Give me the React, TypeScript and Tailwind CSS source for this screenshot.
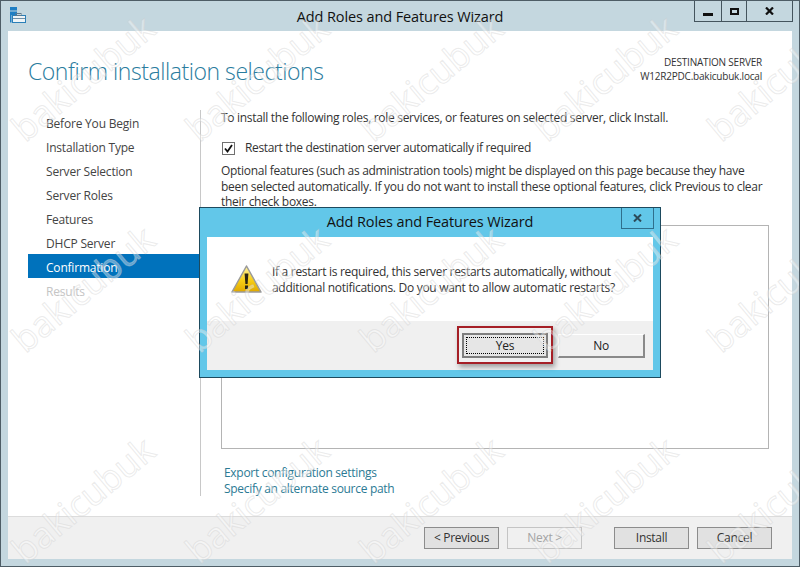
const steps = [
  "Before You Begin",
  "Installation Type",
  "Server Selection",
  "Server Roles",
  "Features",
  "DHCP Server",
  "Confirmation",
  "Results",
]

const marks: { x: number; y: number }[] = []
for (const y of [77, 288, 499]) {
  for (const x of [82, 256, 430, 604, 778]) {
    marks.push({ x, y })
  }
}

function ServerIcon() {
  return (
    <svg width="17" height="17" viewBox="0 0 17 17" className="absolute left-[9px] top-[6px]">
      <rect x="0" y="0" width="7" height="3.5" fill="#1f7fc4" />
      <rect x="0" y="4.5" width="7" height="3.5" fill="#1f7fc4" />
      <rect x="0" y="8" width="1.5" height="7.5" fill="#1f7fc4" />
      <rect x="2.5" y="8.5" width="13" height="7" fill="#eef4f7" stroke="#2a7fb8" />
      <rect x="6" y="6.5" width="5" height="2" fill="none" stroke="#60788a" />
      <rect x="3" y="11" width="12" height="1" fill="#6f8fa6" />
    </svg>
  )
}

function WarningIcon() {
  return (
    <svg width="31" height="29" viewBox="0 0 31 29" className="shrink-0">
      <defs>
        <linearGradient id="warn" x1="0" y1="0" x2="0" y2="1">
          <stop offset="0" stopColor="#fff3a8" />
          <stop offset="0.55" stopColor="#f7ce16" />
          <stop offset="1" stopColor="#e0a800" />
        </linearGradient>
      </defs>
      <path d="M15.5 1 L30 27 H1 Z" fill="url(#warn)" stroke="#9a9a9a" strokeWidth="1.5" strokeLinejoin="round" />
      <path d="M13.6 8.5 H17.4 L16.6 19 H14.4 Z" fill="#2b2412" />
      <rect x="14" y="20.5" width="3" height="3.5" fill="#2b2412" />
    </svg>
  )
}

function Watermarks() {
  return (
    <div className="pointer-events-none absolute inset-0 overflow-hidden">
      {marks.map((m) => (
        <span
          key={`${m.x}-${m.y}`}
          className="absolute -translate-x-1/2 -translate-y-1/2 -rotate-[40deg] font-['Open_Sans',sans-serif] text-[36px] leading-none tracking-normal text-white/40 [-webkit-text-stroke:1px_rgba(205,205,205,0.4)]"
          style={{ left: m.x, top: m.y }}
        >
          bakicubuk
        </span>
      ))}
    </div>
  )
}

function FooterButton({ label, disabled, className }: { label: string; disabled?: boolean; className?: string }) {
  return (
    <div
      className={`flex h-[22px] w-[75px] items-center justify-center border text-[12px] ${
        disabled ? "border-[#c4c4c4] bg-[#f0f0f0] text-[#a3a3a3]" : "border-[#8c8c8c] bg-[#e1e1e1] text-[#333]"
      } ${className ?? ""}`}
    >
      {label}
    </div>
  )
}

function Dialog() {
  return (
    <div className="absolute left-[198px] top-[206px] flex h-[171px] w-[462px] flex-col border border-[#1d4a5e] bg-[#62c7e9] px-[7px] pb-[7px]">
      <div className="relative flex h-[29px] shrink-0 items-center justify-center pb-[2px] text-[14.5px] tracking-[-0.1px] text-[#111]">
        <span>Add Roles and Features Wizard</span>
        <div className="absolute -right-[1px] top-0 flex h-[21px] w-[33px] items-center justify-center border-x border-b border-[#2f6f8c]">
          <svg width="9" height="8" viewBox="0 0 9 8">
            <path d="M1 0.5 L8 7.5 M8 0.5 L1 7.5" stroke="#2c4a58" strokeWidth="2" />
          </svg>
        </div>
      </div>
      <div className="flex flex-1 flex-col bg-white">
        <div className="flex h-[84px] items-start gap-[10px] pl-[24px] pt-[28px]">
          <WarningIcon />
          <p className="-mt-[1px] text-[12px] leading-[15.5px] tracking-[-0.3px] text-[#333]">
            If a restart is required, this server restarts automatically, without
            <br />
            additional notifications. Do you want to allow automatic restarts?
          </p>
        </div>
        <div className="relative flex flex-1 items-start justify-end bg-[#f0f0f0] pr-[8px] pt-[12px]">
          <div className="relative mr-[10px] flex h-[25px] w-[86px] items-center justify-center border-2 border-[#7e7e7e] bg-[#e6e6e6] text-[12px] text-[#222]">
            <div className="absolute inset-[2px] border border-dotted border-black" />
            Yes
            <div className="absolute -bottom-[8px] -left-[7px] -right-[7px] -top-[9px] border-2 border-[#a51f26] shadow-[2px_3px_5px_rgba(0,0,0,0.35)]" />
          </div>
          <div className="mt-[1px] flex h-[24px] w-[87px] items-center justify-center border-r-2 border-b-2 border-l border-t border-b-[#8a8a8a] border-l-white border-r-[#8a8a8a] border-t-white bg-[#f0f0f0] text-[12px] text-[#222]">
            No
          </div>
        </div>
      </div>
    </div>
  )
}

export default function App() {
  return (
    <div className="relative flex h-[567px] w-[800px] flex-col overflow-hidden border border-[#4e5d66] bg-[#c4d7df] font-['Open_Sans',sans-serif] tracking-[-0.3px] text-[#333]">
      <div className="relative flex h-[30px] shrink-0 items-center justify-center pt-[1px] text-[14.5px] tracking-[-0.1px] text-[#111]">
        <ServerIcon />
        <span>Add Roles and Features Wizard</span>
        <div className="absolute right-[6px] top-0 flex h-[21px] border-x border-b border-[#44545d]">
          <div className="flex w-[27px] items-end justify-center border-r border-[#44545d] pb-[5px]">
            <div className="h-[3px] w-[10px] bg-[#111]" />
          </div>
          <div className="flex w-[25px] items-center justify-center border-r border-[#44545d]">
            <div className="h-[7px] w-[9px] border-2 border-[#111]" />
          </div>
          <div className="flex w-[45px] items-center justify-center">
            <svg width="9" height="8" viewBox="0 0 9 8">
              <path d="M1 0.5 L8 7.5 M8 0.5 L1 7.5" stroke="#111" strokeWidth="2.2" />
            </svg>
          </div>
        </div>
      </div>

      <div className="mx-[7px] mb-[7px] flex flex-1 flex-col bg-white">
        <div className="flex h-[79px] shrink-0 justify-between pl-[20px] pr-[30px]">
          <h1 className="pt-[22px] text-[23px] font-light leading-[36px] tracking-[-0.45px] text-[#2a7c9e]">
            Confirm installation selections
          </h1>
          <div className="pt-[24px] text-right text-[10px] leading-[14px] tracking-[-0.2px] text-[#333]">
            DESTINATION SERVER
            <br />
            W12R2PDC.bakicubuk.local
          </div>
        </div>

        <div className="flex h-[386px] shrink-0 pl-[20px]">
          <ul className="w-[172px] shrink-0 text-[12px] tracking-[-0.2px]">
            {steps.map((s) => (
              <li
                key={s}
                className={`flex h-[24px] items-center pl-[18px] pt-[3px] ${
                  s === "Confirmation"
                    ? "bg-[#0072bc] text-white"
                    : s === "Results"
                      ? "text-[#c4c4c4]"
                      : "text-[#444]"
                }`}
              >
                {s}
              </li>
            ))}
          </ul>
          <div className="flex w-[569px] flex-col border-l border-[#c8c8c8] pl-[20px] text-[12px]">
            <p className="h-[16px] shrink-0 leading-[16px]">
              To install the following roles, role services, or features on selected server, click Install.
            </p>
            <div className="mt-[14px] flex h-[16px] shrink-0 items-center gap-[10px] pl-[1px]">
              <div className="flex h-[13px] w-[13px] items-center justify-center border border-[#707070]">
                <svg width="9" height="9" viewBox="0 0 9 9">
                  <path d="M1 4.5 L3.5 7.5 L8 1" fill="none" stroke="#111" strokeWidth="1.8" />
                </svg>
              </div>
              <span className="tracking-[-0.35px]">Restart the destination server automatically if required</span>
            </div>
            <p className="mt-[7px] h-[48px] shrink-0 whitespace-nowrap leading-[15.5px]">
              Optional features (such as administration tools) might be displayed on this page because they have
              <br />
              been selected automatically. If you do not want to install these optional features, click Previous to clear
              <br />
              their check boxes.
            </p>
            <div className="mt-[14px] h-[224px] w-[548px] shrink-0 border border-[#b4b4b4]" />
            <div className="mt-[16px] shrink-0 pl-[3px] leading-[16px] text-[#2b7a94]">
              <div>Export configuration settings</div>
              <div>Specify an alternate source path</div>
            </div>
          </div>
        </div>

        <div className="mt-[20px] flex flex-1 items-start justify-end border-t border-[#dcdcdc] bg-[#f0f0f0] pr-[20px] pt-[10px]">
          <FooterButton label="< Previous" />
          <FooterButton label="Next >" disabled className="ml-[8px]" />
          <FooterButton label="Install" className="ml-[32px]" />
          <FooterButton label="Cancel" className="ml-[8px]" />
        </div>
      </div>

      <Dialog />
      <Watermarks />
    </div>
  )
}
